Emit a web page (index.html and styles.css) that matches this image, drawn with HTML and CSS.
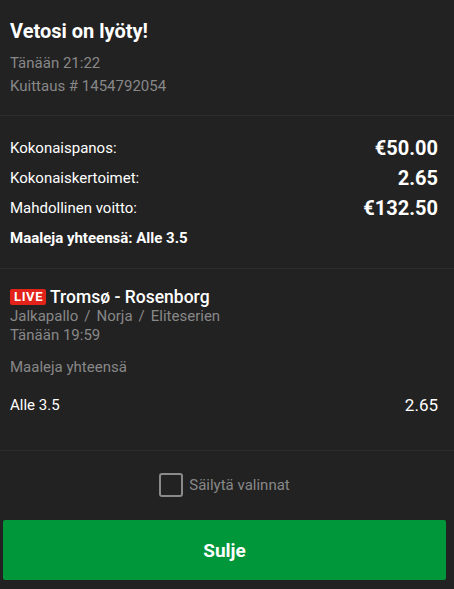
FILE: index.html
```html
<!DOCTYPE html>
<html lang="fi">
<head>
<meta charset="utf-8">
<link rel="stylesheet" href="styles.css">
</head>
<body>
<div class="receipt">
  <section class="head">
    <h1 class="title">Vetosi on lyöty!</h1>
    <div class="muted">Tänään 21:22</div>
    <div class="muted">Kuittaus # 1454792054</div>
  </section>
  <section class="totals">
    <div class="row"><span>Kokonaispanos:</span><span class="val">€50.00</span></div>
    <div class="row"><span>Kokonaiskertoimet:</span><span class="val">2.65</span></div>
    <div class="row"><span>Mahdollinen voitto:</span><span class="val">€132.50</span></div>
    <div class="sel">Maaleja yhteensä: Alle 3.5</div>
  </section>
  <section class="event">
    <div class="match"><span class="live">LIVE</span><span class="teams">Tromsø - Rosenborg</span></div>
    <div class="muted">Jalkapallo<span class="sep">/</span>Norja<span class="sep">/</span>Eliteserien</div>
    <div class="muted">Tänään 19:59</div>
    <div class="muted market">Maaleja yhteensä</div>
    <div class="pick"><span>Alle 3.5</span><span class="odd">2.65</span></div>
  </section>
  <section class="foot">
    <label class="keep"><span class="box"></span><span>Säilytä valinnat</span></label>
    <button class="close">Sulje</button>
  </section>
</div>
</body>
</html>
```
FILE: styles.css
```css
html, body {
  margin: 0;
  padding: 0;
  background: #222222;
}
body {
  font-family: Roboto, "Liberation Sans", sans-serif;
  color: #ffffff;
  width: 454px;
  height: 589px;
  overflow: hidden;
}
.receipt {
  display: flex;
  flex-direction: column;
}
section {
  border-bottom: 1px solid #2d2d2d;
}
.head {
  padding: 18px 16px 20px 10px;
  height: 116px;
  box-sizing: border-box;
}
.title {
  margin: 0 0 8px;
  font-size: 20px;
  font-weight: 700;
  line-height: 26px;
}
.muted {
  color: #888888;
  font-size: 15px;
  line-height: 23px;
}
.totals {
  height: 153px;
  box-sizing: border-box;
  padding: 17px 16px 0 10px;
}
.row {
  display: flex;
  justify-content: space-between;
  align-items: center;
  font-size: 15px;
  height: 30px;
}
.val {
  font-size: 20px;
  font-weight: 700;
}
.sel {
  font-size: 15px;
  font-weight: 700;
  line-height: 30px;
}
.event {
  height: 182px;
  box-sizing: border-box;
  padding: 18px 16px 0 10px;
}
.event .muted {
  line-height: 19px;
}
.sep {
  padding: 0 6px;
}
.match {
  display: flex;
  align-items: center;
  height: 20px;
}
.live {
  background: #e2231a;
  color: #fff;
  font-size: 13px;
  font-weight: 700;
  letter-spacing: 0.6px;
  padding: 0 3px 0 4px;
  height: 16px;
  line-height: 16px;
  border-radius: 2px;
  margin-right: 4px;
}
.teams {
  font-size: 17.5px;
  font-weight: 500;
}
.event .market {
  margin-top: 13px;
}
.pick {
  display: flex;
  justify-content: space-between;
  align-items: center;
  font-size: 15px;
  margin-top: 18px;
}
.odd {
  font-size: 17px;
}
.foot {
  border-bottom: none;
  display: flex;
  flex-direction: column;
  align-items: center;
  padding: 21px 8px 0 3px;
}
.keep {
  display: flex;
  align-items: center;
  gap: 6px;
  color: #888888;
  font-size: 15px;
  height: 25px;
}
.box {
  width: 20px;
  height: 20px;
  border: 2.5px solid #8a8a8a;
  border-radius: 3px;
}
.close {
  margin-top: 23px;
  width: 443px;
  height: 60px;
  background: #00963a;
  border: none;
  border-radius: 2px;
  color: #ffffff;
  font-family: Roboto, "Liberation Sans", sans-serif;
  font-size: 19px;
  font-weight: 700;
}
```
